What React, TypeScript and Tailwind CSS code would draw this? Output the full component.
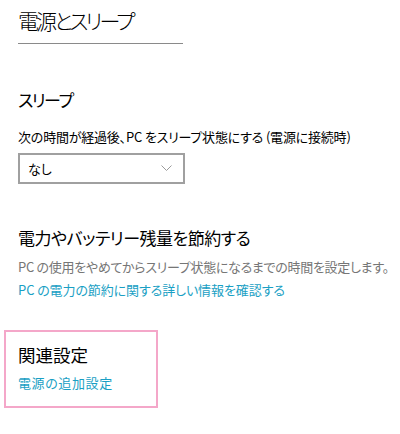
import React from "react";

export default function App() {
  return (
    <div
      className="w-[400px] h-[434px] bg-white overflow-hidden pl-[18px] text-black [font-family:'Noto_Sans_CJK_JP','Noto_Sans',sans-serif] [font-feature-settings:'palt']"
    >
      <div className="pt-[4px] w-[165px] border-b border-[#8a8a8a] pb-[7px]">
        <h1 className="text-[21px] leading-[32px] font-light tracking-[-3px]">電源とスリープ</h1>
      </div>

      <h2 className="mt-[44px] text-[17px] leading-[24px] font-normal tracking-[-1.5px]">スリープ</h2>
      <p className="mt-[15px] text-[13px] leading-[20px] tracking-[-0.2px]">
        次の時間が経過後、PC をスリープ状態にする (電源に接続時)
      </p>
      <div className="mt-[6px] w-[167px] h-[31px] border-2 border-[#a0a0a0] flex items-center justify-between pl-[8px] pr-[11px]">
        <span className="text-[13px] leading-[20px]">なし</span>
        <svg width="11" height="7" viewBox="0 0 11 7" fill="none">
          <polyline points="0.5,0.5 5.5,5.5 10.5,0.5" stroke="#9a9a9a" strokeWidth="1" />
        </svg>
      </div>

      <h2 className="mt-[42px] text-[17px] leading-[24px] font-normal tracking-[-0.5px]">電力やバッテリー残量を節約する</h2>
      <p className="mt-[7px] text-[13px] leading-[20px] tracking-[-0.3px] text-[#767676] whitespace-nowrap">
        PC の使用をやめてからスリープ状態になるまでの時間を設定します。
      </p>
      <p className="mt-[3px] text-[13px] leading-[20px] tracking-[-0.1px] text-[#1a9fc4]">
        PC の電力の節約に関する詳しい情報を確認する
      </p>

      <div className="mt-[30px] -ml-[14px] w-[154px] border-2 border-[#f4a7c9] pl-[12px] pt-[11px] pb-[13px]">
        <h2 className="text-[17.5px] leading-[24px] font-normal">関連設定</h2>
        <p className="mt-[6px] text-[13px] leading-[20px] tracking-[0.6px] text-[#1a9fc4]">電源の追加設定</p>
      </div>
    </div>
  );
}
